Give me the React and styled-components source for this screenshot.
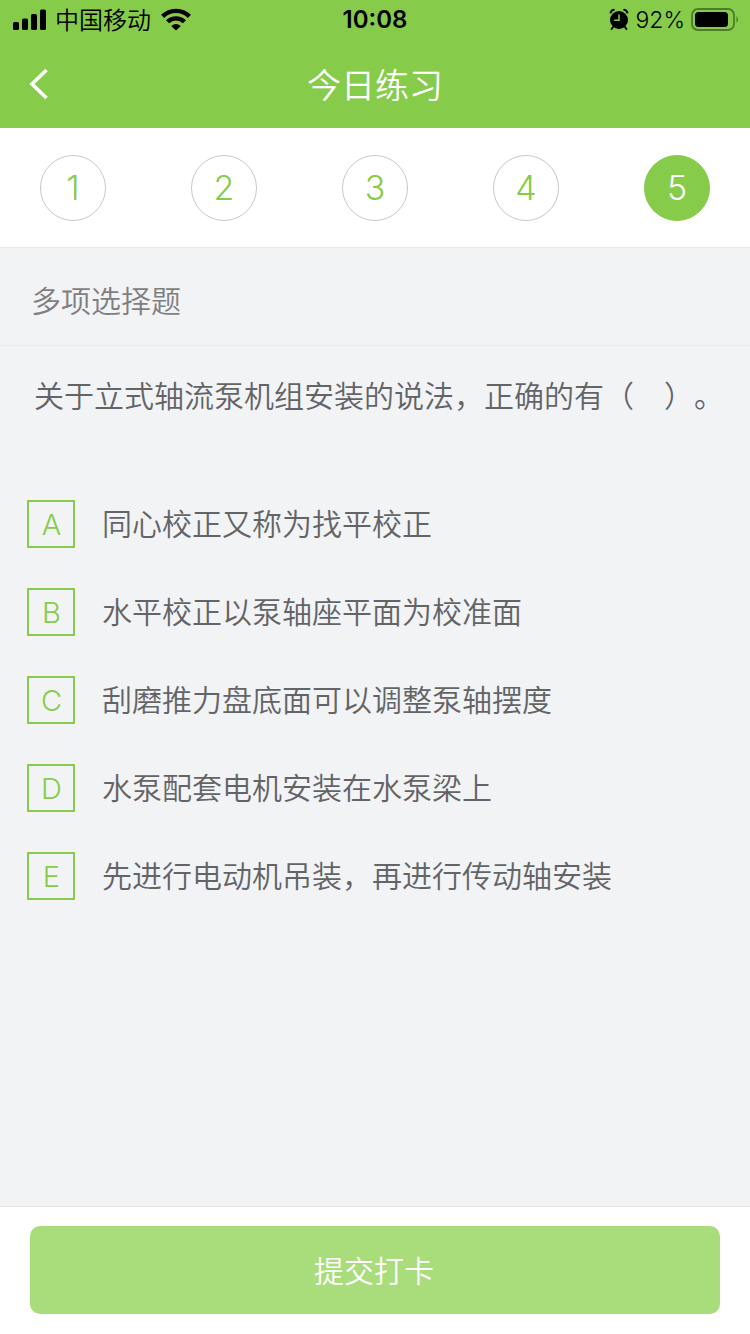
import React, { useState } from 'react'
import styled, { createGlobalStyle } from 'styled-components'

const GlobalStyle = createGlobalStyle`
  * {
    box-sizing: border-box;
  }

  body {
    margin: 0;
    background: #f2f3f5;
    font-family: Inter, 'Noto Sans CJK SC', sans-serif;
    font-weight: 350;
  }

  button {
    margin: 0;
    padding: 0;
    border: none;
    background: none;
    font-family: inherit;
    font-weight: inherit;
    cursor: pointer;
  }
`

const Page = styled.div`
  min-height: 100vh;
  display: flex;
  flex-direction: column;
`

const TopArea = styled.header`
  background: #86cc4a;
`

const StatusBar = styled.div`
  display: grid;
  grid-template-columns: 1fr auto 1fr;
  align-items: center;
  height: 40px;
  padding: 0 11px 0 13px;
  color: #000;
  font-size: 24px;
  line-height: 38px;
`

const StatusGroup = styled.div`
  display: flex;
  align-items: center;
  justify-content: ${({ $end }) => ($end ? 'flex-end' : 'flex-start')};
  gap: ${({ $gap }) => $gap}px;
`

const Carrier = styled.span`
  padding-top: 2px;
`

const Percent = styled.span`
  font-size: 23px;
`

const Clock = styled.time`
  padding-right: 2px;
  font-weight: 600;
`

const NavBar = styled.div`
  display: grid;
  grid-template-columns: 1fr auto 1fr;
  align-items: center;
  height: 88px;
  padding: 0 24px;
`

const BackButton = styled.button`
  display: flex;
  justify-self: start;
`

const Title = styled.h1`
  margin: 0;
  padding-top: 4px;
  color: #fff;
  font-size: 34px;
  font-weight: 350;
  line-height: 48px;
`

const Steps = styled.nav`
  display: flex;
  justify-content: space-between;
  padding: 27px 40px 26px;
  background: #fff;
  border-bottom: 1px solid #e9e9e9;
`

const Step = styled.button`
  width: 66px;
  height: 66px;
  border: 1px solid ${({ $active }) => ($active ? '#86cc4a' : '#c8c8c8')};
  border-radius: 50%;
  background: ${({ $active }) => ($active ? '#86cc4a' : '#fff')};
  color: ${({ $active }) => ($active ? '#fff' : '#86cc4a')};
  font-size: 34px;
  line-height: 64px;
`

const QuestionType = styled.h2`
  margin: 0;
  padding: 36px 31px 27px;
  border-bottom: 1px solid #e9eaec;
  color: #7f7f81;
  font-size: 30px;
  font-weight: 350;
  line-height: 34px;
`

const Question = styled.main`
  flex: 1;
  padding: 28px 24px 40px 27px;
`

const Stem = styled.p`
  margin: 0 0 82px;
  padding-left: 7px;
  color: #636466;
  font-size: 30px;
  line-height: 44px;
  text-spacing-trim: space-all;
`

const Options = styled.div`
  display: flex;
  flex-direction: column;
  gap: 40px;
`

const Option = styled.label`
  display: flex;
  align-items: center;
  gap: 27px;
  color: #636466;
  font-size: 30px;
  line-height: 48px;
  cursor: pointer;
`

const Letter = styled.span`
  flex: none;
  width: 48px;
  height: 48px;
  padding-left: 1px;
  border: 2px solid #86cc4a;
  color: #86cc4a;
  font-size: 29px;
  line-height: 46px;
  text-align: center;
`

const Tick = styled.input`
  position: absolute;
  opacity: 0;

  &:checked + ${Letter} {
    background: #86cc4a;
    color: #fff;
  }
`

const Footer = styled.footer`
  padding: 19px 30px 20px;
  background: #fff;
  border-top: 1px solid #e6e6e8;
`

const Submit = styled.button`
  display: block;
  width: 100%;
  height: 88px;
  padding: 0 2px 2px 0;
  border-radius: 10px;
  background: #a9dc7b;
  color: #fff;
  font-size: 30px;
`

const SignalIcon = () => (
  <svg width="34" height="24" viewBox="0 0 34 24">
    <rect x="0" y="14" width="6" height="8" rx="1.5" />
    <rect x="9" y="10.5" width="6" height="11.5" rx="1.5" />
    <rect x="18" y="6" width="6" height="16" rx="1.5" />
    <rect x="27" y="1.5" width="6" height="20.5" rx="1.5" />
  </svg>
)

const WifiIcon = () => (
  <svg width="32" height="24" viewBox="-2 0 32 24" fill="none" stroke="#000" strokeWidth="4.4">
    <path d="M1.6 8.4a19 19 0 0 1 26.8 0" />
    <path d="M6.6 13.8a12 12 0 0 1 16.8 0" />
    <path d="M15 22.6l-4.8-4.6a6.8 6.8 0 0 1 9.6 0z" fill="#000" stroke="none" />
  </svg>
)

const AlarmIcon = () => (
  <svg width="20" height="24" viewBox="0 0 20 24" fill="none" stroke="#000" strokeLinecap="round">
    <circle cx="10" cy="12" r="9" fill="#000" stroke="none" />
    <path d="M1.6 4.6a4 4 0 0 1 3.2-2.8M18.4 4.6a4 4 0 0 0-3.2-2.8" strokeWidth="2" />
    <path d="M4 19l-1.4 2M16 19l1.4 2" strokeWidth="2" />
    <path d="M10 7v5.2H5.6" stroke="#86cc4a" strokeWidth="1.5" />
  </svg>
)

const BatteryIcon = () => (
  <svg width="48" height="24" viewBox="0 0 48 24">
    <rect x="1" y="1" width="42" height="21" rx="6" fill="none" stroke="#507a2c" strokeWidth="1.8" />
    <rect x="4" y="4" width="33" height="15" rx="3.5" />
    <path d="M45.5 8q3 3.5 0 7z" fill="#507a2c" />
  </svg>
)

const BackIcon = () => (
  <svg width="30" height="36" viewBox="0 0 30 36" fill="none" stroke="#fff" strokeWidth="3.6">
    <path d="M22.5 4L8 18l14.5 14" />
  </svg>
)

const steps = [1, 2, 3, 4, 5]

const options = [
  { letter: 'A', text: '同心校正又称为找平校正' },
  { letter: 'B', text: '水平校正以泵轴座平面为校准面' },
  { letter: 'C', text: '刮磨推力盘底面可以调整泵轴摆度' },
  { letter: 'D', text: '水泵配套电机安装在水泵梁上' },
  { letter: 'E', text: '先进行电动机吊装，再进行传动轴安装' },
]

export default function App() {
  const [current, setCurrent] = useState(5)

  return (
    <Page lang="zh-CN">
      <GlobalStyle />
      <TopArea>
        <StatusBar>
          <StatusGroup $gap={8}>
            <SignalIcon />
            <Carrier>中国移动</Carrier>
            <WifiIcon />
          </StatusGroup>
          <Clock>10:08</Clock>
          <StatusGroup $gap={6} $end>
            <AlarmIcon />
            <Percent>92%</Percent>
            <BatteryIcon />
          </StatusGroup>
        </StatusBar>
        <NavBar>
          <BackButton type="button" aria-label="返回">
            <BackIcon />
          </BackButton>
          <Title>今日练习</Title>
        </NavBar>
      </TopArea>
      <Steps>
        {steps.map((n) => (
          <Step key={n} type="button" $active={n === current} onClick={() => setCurrent(n)}>
            {n}
          </Step>
        ))}
      </Steps>
      <QuestionType>多项选择题</QuestionType>
      <Question>
        <Stem>关于立式轴流泵机组安装的说法，正确的有（&#x3000;）。</Stem>
        <Options>
          {options.map(({ letter, text }) => (
            <Option key={letter}>
              <Tick type="checkbox" name="answer" value={letter} />
              <Letter>{letter}</Letter>
              <span>{text}</span>
            </Option>
          ))}
        </Options>
      </Question>
      <Footer>
        <Submit type="button">提交打卡</Submit>
      </Footer>
    </Page>
  )
}
